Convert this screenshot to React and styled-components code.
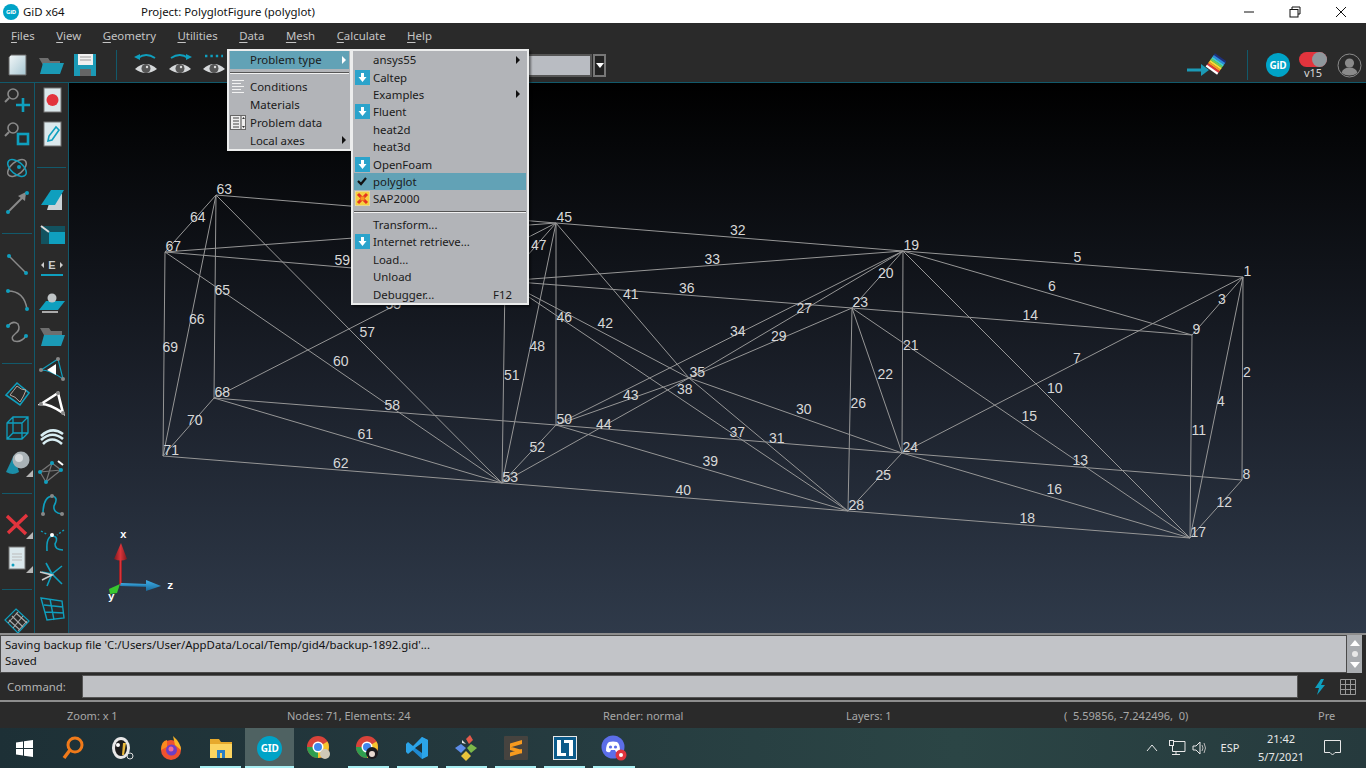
import React from 'react';
import styled, { createGlobalStyle } from 'styled-components';

const uiFont = '"Noto Sans", "Open Sans", sans-serif';

const GlobalStyle = createGlobalStyle`
  html, body {
    margin: 0;
    padding: 0;
    background: #2a2a2a;
  }
  * {
    box-sizing: border-box;
  }
`;

const Screen = styled.div`
  position: relative;
  width: 1366px;
  height: 768px;
  overflow: hidden;
  display: flex;
  flex-direction: column;
  font-family: ${uiFont};
  font-size: 11.4px;
  background: #2a2a2a;
`;

/* title bar */
const TitleBar = styled.div`
  height: 23px;
  background: #fff;
  display: flex;
  align-items: center;
  padding-left: 3px;
  color: #111;
  flex: none;
`;
const LogoDot = styled.span`
  width: ${p => p.$size}px;
  height: ${p => p.$size}px;
  border-radius: 50%;
  background: #00a3c7;
  color: #fff;
  font-weight: 700;
  font-size: ${p => p.$font}px;
  display: flex;
  align-items: center;
  justify-content: center;
  flex: none;
  letter-spacing: -0.2px;
`;
const AppName = styled.span`
  margin-left: 4px;
  width: 118px;
`;
const WindowButtons = styled.div`
  margin-left: auto;
  display: flex;
  padding-right: 2px;
`;
const WindowButton = styled.div`
  width: 46px;
  height: 23px;
  display: flex;
  align-items: center;
  justify-content: center;
`;

/* menu bar */
const MenuBar = styled.div`
  height: 25px;
  display: flex;
  align-items: center;
  gap: 21.5px;
  padding-left: 11px;
  color: #c4c4c4;
  flex: none;
`;
const Underlined = styled.span`
  text-decoration: underline;
  text-underline-offset: 2px;
  text-decoration-thickness: 1px;
`;

/* top toolbar */
const ToolBar = styled.div`
  height: 35px;
  display: flex;
  align-items: center;
  border-bottom: 1px solid #12596b;
  flex: none;
`;
const TopTool = styled.div`
  width: ${p => p.$w || 34}px;
  height: 34px;
  display: flex;
  align-items: center;
  justify-content: center;
  flex: none;
`;
const ToolSep = styled.div`
  width: 1px;
  height: 30px;
  background: #12596b;
  margin: 0 ${p => p.$right}px 0 ${p => p.$left}px;
  flex: none;
`;
const Combo = styled.div`
  width: 352px;
  height: 23px;
  margin-left: 9px;
  background: #b9bcc2;
  border: 2px solid #555;
  flex: none;
`;
const ComboArrow = styled.div`
  width: 13px;
  height: 23px;
  margin-left: 1px;
  border: 2px solid #777;
  background: #222;
  display: flex;
  align-items: center;
  justify-content: center;
  flex: none;
  &::after {
    content: '';
    border-left: 4px solid transparent;
    border-right: 4px solid transparent;
    border-top: 5px solid #fff;
  }
`;
const ToolRight = styled.div`
  margin-left: auto;
  display: flex;
  align-items: center;
`;
const VersionBox = styled.div`
  width: 32px;
  display: flex;
  flex-direction: column;
  align-items: center;
  color: #d8d8d8;
  font-size: 11px;
  line-height: 11px;
  margin: 0 7px;
`;
const Toggle = styled.div`
  position: relative;
  width: 28px;
  height: 15px;
  border-radius: 8px;
  background: #e2343d;
  &::after {
    content: '';
    position: absolute;
    right: 0;
    top: 0;
    width: 15px;
    height: 15px;
    border-radius: 50%;
    background: #8f979c;
  }
`;

/* middle: side tools + canvas */
const Middle = styled.div`
  height: 552px;
  display: flex;
  flex: none;
  border-bottom: 2px solid #8d8d8d;
`;
const SideColumn = styled.div`
  width: ${p => p.$w}px;
  flex: none;
  border-right: 1px solid #12596b;
  overflow: hidden;
`;
const SideTool = styled.div`
  position: relative;
  height: 34px;
  display: flex;
  align-items: center;
  justify-content: center;
  &::after {
    content: ${p => (p.$corner ? "''" : 'none')};
    position: absolute;
    right: 1px;
    bottom: 2px;
    border-left: 7px solid transparent;
    border-bottom: 7px solid #b5b5b5;
  }
`;
const SideSep = styled.div`
  height: ${p => p.$h || 28}px;
  display: flex;
  align-items: center;
  padding: 0 2px;
  &::after {
    content: '';
    flex: 1;
    height: 1px;
    background: #12596b;
  }
`;
const Canvas = styled.div`
  flex: 1;
  background: linear-gradient(180deg, #000 0%, #1b202a 55%, #2f3a4a 100%);
`;
const MeshSvg = styled.svg`
  display: block;
  width: 100%;
  height: 100%;
`;
const MeshLabel = styled.text`
  font-family: "Liberation Sans", sans-serif;
  font-size: 14px;
  fill: #d8d8d8;
`;
const AxisLabel = styled.text`
  font-family: "Liberation Mono", monospace;
  font-size: 11px;
  font-weight: 700;
  fill: #fff;
`;

/* messages, command, status */
const MessageRow = styled.div`
  height: 38px;
  display: flex;
  flex: none;
  padding-right: 4px;
`;
const MessageBox = styled.div`
  flex: 1;
  background: #c2c4c8;
  border: 1px solid #4a4a4a;
  padding: 1px 4px;
  color: #111;
  line-height: 16px;
  white-space: pre;
`;
const ScrollBar = styled.div`
  width: 15px;
  background: #a9acb0;
  display: flex;
  flex-direction: column;
  align-items: center;
  justify-content: space-between;
  padding: 5px 0;
`;
const ScrollUp = styled.div`
  border-left: 5px solid transparent;
  border-right: 5px solid transparent;
  border-bottom: 6px solid #fff;
`;
const ScrollDown = styled.div`
  border-left: 5px solid transparent;
  border-right: 5px solid transparent;
  border-top: 6px solid #fff;
`;
const ScrollDot = styled.div`
  width: 6px;
  height: 6px;
  border-radius: 50%;
  background: #e8e8e8;
`;
const CommandRow = styled.div`
  height: 29px;
  display: flex;
  align-items: center;
  flex: none;
  border-bottom: 2px solid #8d8d8d;
  padding-left: 7px;
  color: #b5b5b5;
`;
const CommandLabel = styled.span`
  width: 75px;
  flex: none;
`;
const CommandInput = styled.div`
  width: 1216px;
  height: 23px;
  background: #bfc1c5;
  border: 1px solid #555;
  flex: none;
`;
const CommandTools = styled.div`
  display: flex;
  align-items: center;
  gap: 14px;
  margin-left: 16px;
`;
const StatusBar = styled.div`
  height: 26px;
  display: flex;
  align-items: center;
  flex: none;
  padding-left: 67px;
  color: #a8a8a8;
  font-size: 11px;
  white-space: pre;
`;
const StatusCell = styled.span`
  width: ${p => p.$w}px;
  flex: none;
`;

/* taskbar */
const TaskBar = styled.div`
  height: 40px;
  display: flex;
  align-items: stretch;
  flex: none;
  background: linear-gradient(90deg, #1d3036 0%, #24393e 35%, #2b4545 70%, #263a3d 100%);
`;
const TaskItem = styled.div`
  position: relative;
  width: ${p => p.$w || 49.2}px;
  flex: none;
  display: flex;
  align-items: center;
  justify-content: center;
  background: ${p => (p.$active ? '#4f6262' : 'transparent')};
  &::after {
    content: ${p => (p.$running ? "''" : 'none')};
    position: absolute;
    bottom: 0;
    left: ${p => (p.$active ? 0 : 4)}px;
    right: ${p => (p.$active ? 0 : 4)}px;
    height: 2px;
    background: #a8eef2;
  }
`;
const Tray = styled.div`
  margin-left: auto;
  display: flex;
  align-items: center;
  color: #e8e8e8;
`;
const TrayIcon = styled.div`
  width: ${p => p.$w}px;
  display: flex;
  justify-content: center;
  flex: none;
`;
const TrayText = styled.span`
  width: ${p => p.$w}px;
  text-align: center;
  flex: none;
  font-size: 11px;
  line-height: 18px;
`;

/* dropdown menus */
const Menu = styled.div`
  position: absolute;
  left: ${p => p.$left}px;
  top: 49px;
  width: ${p => p.$w}px;
  background: #b2b4b8;
  border: 2px solid #eceded;
  padding: 0 1px;
  color: #1a1a1a;
  box-shadow: 2px 2px 2px rgba(0, 0, 0, 0.45);
`;
const MenuRow = styled.div`
  position: relative;
  height: ${p => p.$h}px;
  display: flex;
  align-items: center;
  padding-left: ${p => p.$pad}px;
  padding-bottom: ${p => (p.$lift ? 2 : 0)}px;
  background: ${p => (p.$on ? '#62a2b6' : 'transparent')};
  white-space: pre;
`;
const RowIcon = styled.span`
  position: absolute;
  left: 0;
  top: 0;
  bottom: 0;
  width: 16px;
  display: flex;
  align-items: center;
  justify-content: center;
`;
const SubArrow = styled.span`
  position: absolute;
  right: ${p => p.$right}px;
  top: 50%;
  margin-top: -4px;
  border-top: 4px solid transparent;
  border-bottom: 4px solid transparent;
  border-left: 4px solid ${p => p.$color || '#111'};
`;
const Shortcut = styled.span`
  position: absolute;
  right: 14px;
`;
const MenuSep = styled.div`
  height: ${p => p.$h}px;
  display: flex;
  flex-direction: column;
  justify-content: center;
  &::before {
    content: '';
    height: 1px;
    background: #555;
  }
  &::after {
    content: '';
    height: 1px;
    background: #f2f2f2;
  }
`;

/* mesh data, in page coordinates */
const nodes = {
  1: [1243, 277], 8: [1242, 480], 9: [1192, 335], 17: [1190, 538],
  19: [903, 251], 23: [852, 308], 24: [902, 453], 28: [848, 511],
  35: [689, 378], 45: [556, 223], 49: [505, 281], 50: [556, 425],
  53: [502, 483], 63: [216, 195], 67: [165, 252], 68: [214, 398], 71: [163, 456],
};
const edges = [
  [2, 1, 8], [3, 1, 9], [4, 1, 17], [5, 1, 19], [6, 9, 19], [7, 1, 24],
  [10, 19, 17], [11, 9, 17], [12, 8, 17], [13, 24, 8], [14, 9, 23], [15, 23, 17],
  [16, 24, 17], [18, 28, 17], [20, 19, 23], [21, 19, 24], [22, 23, 24], [25, 24, 28],
  [26, 23, 28], [27, 19, 35], [29, 23, 35], [30, 24, 35], [31, 28, 35], [32, 19, 45],
  [33, 19, 49], [34, 19, 50], [36, 23, 49], [37, 50, 24], [38, 49, 28], [39, 50, 28],
  [40, 53, 28], [41, 45, 35], [42, 49, 35], [43, 50, 35], [44, 53, 35], [46, 45, 50],
  [47, 45, 49], [48, 45, 53], [51, 49, 53], [52, 50, 53], [54, 63, 45], [56, 67, 45],
  [55, 68, 45], [57, 63, 53], [58, 68, 50], [59, 67, 49], [60, 67, 53], [61, 68, 53],
  [62, 71, 53], [64, 63, 67], [65, 63, 68], [66, 63, 71], [69, 67, 71], [70, 68, 71],
];
// the labels of the far left block sit a little further left of their edge
const labelShift = { 58: -1, 59: -1, 60: -1, 61: -1, 64: -1, 65: -1, 66: -1, 69: -2, 70: -2 };

const Mesh = () => (
  <MeshSvg viewBox="69 83 1297 550">
    <defs>
      <linearGradient id="red" x1="0" x2="1" y1="0" y2="0">
        <stop offset="0" stopColor="#7d1a1e" />
        <stop offset="0.5" stopColor="#d8343a" />
        <stop offset="1" stopColor="#7d1a1e" />
      </linearGradient>
      <linearGradient id="blue" x1="0" x2="0" y1="0" y2="1">
        <stop offset="0" stopColor="#3fb0ea" />
        <stop offset="1" stopColor="#1a6b9c" />
      </linearGradient>
    </defs>
    {edges.map(([n, a, b]) => (
      <line
        key={n}
        x1={nodes[a][0]}
        y1={nodes[a][1]}
        x2={nodes[b][0]}
        y2={nodes[b][1]}
        stroke="#969696"
        strokeWidth="1"
      />
    ))}
    {edges.map(([n, a, b]) => (
      <MeshLabel
        key={n}
        x={(nodes[a][0] + nodes[b][0]) / 2 + 0.5 + (labelShift[n] || 0)}
        y={(nodes[a][1] + nodes[b][1]) / 2 - 2}
      >
        {n}
      </MeshLabel>
    ))}
    {Object.keys(nodes).map(id => (
      <MeshLabel key={id} x={nodes[id][0] + 0.5} y={nodes[id][1] - 1.5}>
        {id}
      </MeshLabel>
    ))}
    <rect x="119" y="558" width="3" height="27" fill="url(#red)" />
    <path d="M121 543 L114 559 Q121 562 127 559 Z" fill="url(#red)" />
    <path d="M121 583 L147 584 L147 587 L120 586 Z" fill="url(#blue)" />
    <path d="M146 580 L161 586 L146 591 Z" fill="url(#blue)" />
    <path d="M120 584 L117 593 L110 594 L109 589 Z" fill="#38c72e" />
    <AxisLabel x="120" y="538">x</AxisLabel>
    <AxisLabel x="167" y="589">z</AxisLabel>
    <AxisLabel x="108" y="600">y</AxisLabel>
  </MeshSvg>
);

/* tool icons */
const Ico = ({ size = 28, children }) => (
  <svg width={size} height={size} viewBox="0 0 28 28" fill="none">
    {children}
  </svg>
);
const T = '#0f9fbe';
const G = '#8a8a8a';
const Dot = ({ x, y, c = T }) => <circle cx={x} cy={y} r="2" fill={c} />;
const Page = ({ x = 7, y = 3, w = 15, h = 21 }) => (
  <rect x={x} y={y} width={w} height={h} fill="#dbe8ec" stroke="#777" strokeWidth="1" />
);
const Lens = () => (
  <>
    <circle cx="10" cy="8" r="5" stroke={G} strokeWidth="1.6" />
    <path d="M6 12 L2 16" stroke={G} strokeWidth="2" />
  </>
);
const Eye = ({ top }) => (
  <Ico>
    {top}
    <path d="M3 18 Q14 8 25 18 Q14 26 3 18 Z" fill="#d5d8da" />
    <circle cx="14" cy="17.5" r="4.5" fill="#555" />
    <circle cx="15" cy="16" r="1.2" fill="#ddd" />
  </Ico>
);

const leftTools = [
  [<Ico key="a"><Lens /><path d="M20 12V26M13 19H27" stroke={T} strokeWidth="2.6" /></Ico>],
  [<Ico key="b"><Lens /><rect x="15" y="14" width="10" height="10" stroke={T} strokeWidth="2.6" /></Ico>],
  [<Ico key="c"><ellipse cx="14" cy="14" rx="6" ry="11" stroke={G} strokeWidth="1.5" transform="rotate(50 14 14)" /><ellipse cx="14" cy="14" rx="6" ry="11" stroke={T} strokeWidth="1.5" transform="rotate(-50 14 14)" /><circle cx="16" cy="13" r="2" fill={T} /></Ico>],
  [<Ico key="d"><path d="M6 23 L22 7" stroke={G} strokeWidth="2" /><path d="M23 4 L22 13 L15 8 Z" fill={G} /><Dot x={5} y={24} /><Dot x={24} y={5} /></Ico>],
  'sep',
  [<Ico key="e"><path d="M6 6 L23 23" stroke={G} strokeWidth="1.5" /><Dot x={6} y={6} /><Dot x={23} y={23} /></Ico>],
  [<Ico key="f"><path d="M5 7 Q21 7 24 25" stroke={G} strokeWidth="1.5" /><Dot x={5} y={7} /><Dot x={24} y={25} /></Ico>],
  [<Ico key="g"><path d="M5 8 Q10 2 15 6 Q18 12 12 16 Q7 20 11 23 Q18 25 23 18" stroke={G} strokeWidth="1.5" /><Dot x={5} y={8} /><Dot x={23} y={18} /></Ico>],
  'sep',
  [<Ico key="h"><path d="M14 3 L26 13 L17 25 L3 15 Z" stroke={T} strokeWidth="1.6" /><path d="M14 6 Q18 10 23 10 Q21 16 17 22 Q12 16 7 15 Q11 10 14 6 Z" stroke="#b8a9a0" strokeWidth="1" /></Ico>],
  [<Ico key="i"><path d="M4 9 L10 3 H25 V19 L19 25 H4 Z M4 9 H19 V25 M19 9 L25 3 M4 25 L10 19 H25 M10 3 V19" stroke={T} strokeWidth="1.3" /></Ico>],
  [<Ico key="j"><path d="M11 7 L3 24 Q10 28 16 24 Z" fill="#1b8ea8" /><circle cx="18" cy="12" r="8.5" fill="#a9b2b6" /><circle cx="16" cy="10" r="4" fill="#d8dcde" /></Ico>, true],
  'sep',
  [<Ico key="k"><path d="M4 6 L23 24 M24 5 L5 23" stroke="#e2343d" strokeWidth="3.4" /></Ico>, true],
  [<Ico key="l"><Page x={6} y={3} w={16} h={22} /><path d="M9 10H19M9 13H19M9 16H19" stroke="#bbb" /><circle cx="10" cy="21" r="1.5" fill={T} /></Ico>, true],
  'sep',
  [<Ico key="m"><path d="M13 3 L26 15 L15 27 L2 14 Z" stroke={T} strokeWidth="1.2" /><path d="M9 10 L20 21 M13 7 L24 17 M6 14 L17 24 M20 10 L10 22 M24 15 L15 25 M15 6 L5 17" stroke="#aaa" strokeWidth="1.1" /></Ico>],
];

const rightTools = [
  [<Ico key="a"><Page x={6} y={2} w={17} h={24} /><circle cx="14.5" cy="14" r="6" fill="#e2343d" /></Ico>],
  [<Ico key="b"><Page x={6} y={2} w={17} h={24} /><path d="M10 21 L11 16 L18 7 L21 10 L14 20 Z" stroke={T} strokeWidth="1.6" /></Ico>],
  'sep',
  [<Ico key="c"><path d="M14 8 H24 V24 H9 Z" fill="#c9d2d6" /><path d="M13 4 H26 L17 19 H3 Z" fill="#0f9fbe" /></Ico>],
  [<Ico key="d"><path d="M3 6 H27 V24 H3 Z" fill="#12525f" /><path d="M11 12 H27 V24 H11 Z" fill="#0f9fbe" /><path d="M3 6 L11 12" stroke="#ddd" strokeWidth="2" /></Ico>],
  [<Ico key="e"><path d="M3 11 L6 8 V14 Z M25 11 L22 8 V14 Z" fill="#ccc" /><text x="14" y="15" textAnchor="middle" fontFamily="Liberation Sans" fontWeight="700" fontSize="11" fill="#ccc">E</text><path d="M3 21H25" stroke={T} strokeWidth="2" /></Ico>],
  [<Ico key="f"><path d="M8 13 H27 L20 22 H1 Z" fill="#0f9fbe" /><path d="M4 24 H20" stroke="#aaa" strokeWidth="2" /><circle cx="14" cy="10" r="4.5" fill="#bfc4c6" /></Ico>],
  [<Ico key="g"><path d="M2 6 H11 L13 9 H24 V13 H6 Z" fill="#6e6e6e" /><path d="M6 13 H27 L23 24 H3 Z" fill="#1b9ab6" /></Ico>],
  [<Ico key="h"><path d="M3 14 L20 3 L25 23 Q12 14 3 14 Z" stroke={T} strokeWidth="1.2" /><path d="M9 14 L18 8 L18 19 Z" fill="#fff" /><Dot x={3} y={14} c="#888" /><Dot x={20} y={3} c="#888" /><Dot x={25} y={23} c="#888" /></Ico>],
  [<Ico key="i"><path d="M3 14 L20 3 L25 23 Q12 14 3 14 Z" stroke="#fff" strokeWidth="2.6" /><Dot x={3} y={14} c="#888" /><Dot x={20} y={3} c="#888" /><Dot x={25} y={23} c="#888" /></Ico>],
  [<Ico key="j"><path d="M3 12 Q14 2 25 10 M3 16 Q14 6 25 15 M5 20 Q14 11 24 20" stroke="#d8eef3" strokeWidth="2.6" /></Ico>],
  [<Ico key="k"><path d="M2 14 L14 5 L23 12 L8 24 Z M14 5 L8 24 M2 14 L23 12" stroke="#777" strokeWidth="1.2" /><Dot x={2} y={14} /><Dot x={14} y={5} /><Dot x={23} y={12} /><Dot x={8} y={24} /><path d="M20 3 L25 7" stroke="#fff" strokeWidth="2" /></Ico>],
  [<Ico key="l"><path d="M5 22 Q5 5 14 4 Q21 5 16 14 Q15 21 24 22" stroke={T} strokeWidth="1.6" /><Dot x={5} y={22} c="#888" /><Dot x={14} y={4} c="#888" /><Dot x={24} y={22} c="#888" /></Ico>],
  [<Ico key="m"><path d="M9 25 Q8 10 15 10 Q21 11 17 18 Q17 24 25 24" stroke={T} strokeWidth="1.6" /><path d="M3 5 L10 9 M26 4 L19 9" stroke={T} strokeWidth="1.4" strokeDasharray="2 2" /><circle cx="14" cy="9" r="2" fill="#fff" /></Ico>],
  [<Ico key="n"><path d="M14 14 L8 3 M14 14 L24 6 M14 14 L4 12 M14 14 L9 26 M14 14 L24 24" stroke={T} strokeWidth="1.6" /><path d="M2 12 L14 15 L4 20" stroke="#ccc" strokeWidth="1.6" /></Ico>],
  [<Ico key="o"><path d="M3 4 L24 7 L26 24 L9 26 Z M6 11 L25 13 M7 18 L26 19 M12 5 L16 26" stroke={T} strokeWidth="1.4" /></Ico>],
];

const SideTools = ({ items, firstSep }) => {
  let sepIndex = 0;
  return items.map((item, i) => {
    if (item === 'sep') {
      sepIndex += 1;
      return <SideSep key={i} $h={sepIndex === 1 ? firstSep : 28} />;
    }
    return (
      <SideTool key={i} $corner={item[1]}>
        {item[0]}
      </SideTool>
    );
  });
};

const RowDownload = () => (
  <svg width="15" height="15" viewBox="0 0 15 15">
    <rect width="15" height="15" fill="#2ba3cb" />
    <path d="M6 3H9V7H11.5L7.5 12L3.5 7H6Z" fill="#fff" />
  </svg>
);
const RowCheck = () => (
  <svg width="12" height="12" viewBox="0 0 12 12">
    <path d="M2 6 L5 9 L10 3" stroke="#111" strokeWidth="2.2" fill="none" />
  </svg>
);
const RowSap = () => (
  <svg width="15" height="15" viewBox="0 0 15 15">
    <rect width="15" height="15" fill="#f6d040" stroke="#ddd" />
    <path d="M3 3 L12 12 M12 3 L3 12" stroke="#e53320" strokeWidth="3" />
    <rect x="5.5" y="5.5" width="4" height="4" fill="#f59a20" />
  </svg>
);
const RowLines = () => (
  <svg width="14" height="15" viewBox="0 0 14 15">
    <path d="M1 1.5H13M1 4.5H10M1 7.5H13M1 10.5H10M1 13.5H13" stroke="#f2f2f2" />
  </svg>
);
const RowTable = () => (
  <svg width="16" height="15" viewBox="0 0 16 15">
    <rect x="0.5" y="0.5" width="15" height="14" fill="#eee" stroke="#666" />
    <path d="M3 3H9M3 6H9M3 9H9M3 12H9M11 1V14" stroke="#444" />
    <path d="M12 4L13.5 2L15 4ZM12 11L13.5 13L15 11Z" fill="#333" />
  </svg>
);

const problemTypes = [
  ['ansys55', null, true],
  ['Caltep', <RowDownload key="i" />],
  ['Examples', null, true],
  ['Fluent', <RowDownload key="i" />],
  ['heat2d'],
  ['heat3d'],
  ['OpenFoam', <RowDownload key="i" />],
  ['polyglot', <RowCheck key="i" />, false, true],
  ['SAP2000', <RowSap key="i" />],
];
const problemTools = [
  ['Transform...'],
  ['Internet retrieve...', <RowDownload key="i" />],
  ['Load...'],
  ['Unload'],
  ['Debugger...', null, false, false, 'F12'],
];

const MenuItem = ({ item }) => {
  const [label, icon, sub, on, shortcut] = item;
  return (
    <MenuRow $h={17.4} $pad={19} $on={on}>
      {icon && <RowIcon>{icon}</RowIcon>}
      {label}
      {sub && <SubArrow $right={6} />}
      {shortcut && <Shortcut>{shortcut}</Shortcut>}
    </MenuRow>
  );
};

const taskIcons = [
  [
    <svg key="s" width="26" height="26" viewBox="0 0 26 26" fill="none">
      <circle cx="15" cy="10" r="7" stroke="#f07a1a" strokeWidth="3" />
      <path d="M10 15 L4 23" stroke="#f07a1a" strokeWidth="3.4" />
    </svg>,
  ],
  [
    <svg key="p" width="26" height="26" viewBox="0 0 26 26">
      <ellipse cx="12" cy="13" rx="9" ry="11" fill="#e8e8e8" />
      <ellipse cx="12" cy="13" rx="6" ry="8" fill="#1c1c1c" />
      <path d="M14 8 L17 8 L15 20 L13 20 Z" fill="#e8b83a" />
      <circle cx="9" cy="10" r="2" fill="#fff" />
      <circle cx="21" cy="21" r="3" fill="none" stroke="#ddd" />
    </svg>,
  ],
  [
    <svg key="f" width="26" height="26" viewBox="0 0 26 26">
      <circle cx="13" cy="15" r="10" fill="#f0522e" />
      <path d="M15 1 Q23 8 23 15 L17 10 Z" fill="#fbb526" />
      <path d="M3 15 Q3 6 9 5 L9 12 Z" fill="#f98a1e" />
      <circle cx="13.5" cy="15" r="5.5" fill="#6d3fc4" />
      <circle cx="13" cy="14" r="2.5" fill="#f06a9a" />
    </svg>,
  ],
  [
    <svg key="d" width="24" height="24" viewBox="0 0 24 24">
      <path d="M1 3H10L12 6H23V22H1Z" fill="#e6a92c" />
      <path d="M1 8H23V22H1Z" fill="#fbd460" />
      <path d="M8 22V14H16V22H13V17H11V22Z" fill="#2a7fc4" />
    </svg>,
    true,
  ],
  [<LogoDot key="g" $size={25} $font={10}>GID</LogoDot>, true, true],
  [
    <svg key="c" width="26" height="26" viewBox="0 0 26 26">
      <circle cx="12" cy="12" r="11" fill="#d8433a" />
      <path d="M12 12 L1 12 A11 11 0 0 0 12 23 Z" fill="#2f9e4f" />
      <path d="M12 12 L12 23 A11 11 0 0 0 21.5 6.5 Z" fill="#f5c52f" />
      <circle cx="12" cy="12" r="5.5" fill="#fff" />
      <circle cx="12" cy="12" r="4" fill="#4186ee" />
      <circle cx="19" cy="19" r="5" fill="#cfc8b8" />
    </svg>,
  ],
  [
    <svg key="c2" width="26" height="26" viewBox="0 0 26 26">
      <circle cx="12" cy="12" r="11" fill="#d8433a" />
      <path d="M12 12 L1 12 A11 11 0 0 0 12 23 Z" fill="#2f9e4f" />
      <path d="M12 12 L12 23 A11 11 0 0 0 21.5 6.5 Z" fill="#f5c52f" />
      <circle cx="12" cy="12" r="5.5" fill="#fff" />
      <circle cx="12" cy="12" r="4" fill="#4186ee" />
      <circle cx="17" cy="18" r="6" fill="#1c1a1e" />
      <circle cx="17" cy="19" r="3" fill="#e8d8d0" />
    </svg>,
    true,
  ],
  [
    <svg key="v" width="24" height="24" viewBox="0 0 24 24">
      <path d="M17 1 L23 4 V20 L17 23 L6 13 Z" fill="#1f8ad2" />
      <path d="M17 1 L23 4 V20 L17 23 V7 L8 14 L3 18 L1 16 V8 L3 6 L8 10 Z" fill="#2ba4e8" />
      <path d="M17 7 V17 L10 12 Z" fill="#1d3036" />
    </svg>,
    true,
  ],
  [
    <svg key="k" width="26" height="26" viewBox="0 0 26 26">
      <path d="M13 4 L17 0 L20 5 L16 9 Z" fill="#e35a4b" />
      <path d="M8 9 L13 13 L8 18 L2 13 Z" fill="#5d8de8" />
      <path d="M18 9 L24 13 L18 18 L14 13 Z" fill="#7cb84a" />
      <path d="M13 16 L18 21 L13 26 L8 21 Z" fill="#e8c23a" />
      <path d="M9 5 L13 9 L9 8 Z" fill="#e8e8e8" />
    </svg>,
    true,
  ],
  [
    <svg key="st" width="24" height="24" viewBox="0 0 24 24">
      <rect width="24" height="24" rx="1" fill="#46433f" />
      <path d="M6 7.5L18 4V8L6 11.5ZM6 10.5L18 14V17.5L6 14ZM6 16.5L18 13V17L6 20.5Z" fill="#f79a1f" />
    </svg>,
    true,
  ],
  [
    <svg key="l" width="24" height="24" viewBox="0 0 24 24">
      <rect x="0.5" y="0.5" width="23" height="23" fill="#0c5b8a" stroke="#e8e8e8" />
      <path d="M4 4H8V17H13V20H4Z" fill="#fff" />
      <path d="M11 4H20V20H16V7H11Z" fill="#fff" />
    </svg>,
    true,
  ],
  [
    <svg key="dc" width="26" height="26" viewBox="0 0 26 26">
      <circle cx="12" cy="12" r="11.5" fill="#5c6ee8" />
      <path d="M5 16 Q5 9 8 7 Q12 6 16 7 Q19 9 19 16 Q17 18 15 17 L14 15 H10 L9 17 Q7 18 5 16 Z" fill="#fff" />
      <circle cx="9.5" cy="12" r="1.6" fill="#5c6ee8" />
      <circle cx="14.5" cy="12" r="1.6" fill="#5c6ee8" />
      <circle cx="20" cy="20" r="5.5" fill="#e0353e" />
      <circle cx="20" cy="20" r="2" fill="#fff" />
    </svg>,
    true,
  ],
];

const App = () => (
  <Screen>
    <GlobalStyle />
    <TitleBar>
      <LogoDot $size={16} $font={6}>GiD</LogoDot>
      <AppName>GiD x64</AppName>
      <span>Project: PolyglotFigure (polyglot)</span>
      <WindowButtons>
        <WindowButton>
          <svg width="12" height="12" viewBox="0 0 12 12"><path d="M1 6H11" stroke="#111" /></svg>
        </WindowButton>
        <WindowButton>
          <svg width="12" height="12" viewBox="0 0 12 12" fill="none">
            <path d="M3 3V1H11V8H9" stroke="#111" />
            <rect x="1" y="3.5" width="8" height="7.5" stroke="#111" />
          </svg>
        </WindowButton>
        <WindowButton>
          <svg width="12" height="12" viewBox="0 0 12 12"><path d="M1 1L11 11M11 1L1 11" stroke="#111" /></svg>
        </WindowButton>
      </WindowButtons>
    </TitleBar>

    <MenuBar>
      {['Files', 'View', 'Geometry', 'Utilities', 'Data', 'Mesh', 'Calculate', 'Help'].map(m => (
        <span key={m}>
          <Underlined>{m[0]}</Underlined>
          {m.slice(1)}
        </span>
      ))}
    </MenuBar>

    <ToolBar>
      <TopTool>
        <svg width="24" height="26" viewBox="0 0 24 26">
          <defs>
            <linearGradient id="pg" x1="0" x2="1" y1="0" y2="1">
              <stop offset="0" stopColor="#f2f7f8" />
              <stop offset="1" stopColor="#a6c6d2" />
            </linearGradient>
          </defs>
          <path d="M6 3H21V23H4V5Z" fill="url(#pg)" stroke="#666" />
        </svg>
      </TopTool>
      <TopTool>
        <Ico>
          <path d="M2 7H11L13 10H23V14H6Z" fill="#6e6e6e" />
          <path d="M6 12H27L23 23H3Z" fill="#1b9ab6" />
        </Ico>
      </TopTool>
      <TopTool>
        <Ico>
          <rect x="3" y="3" width="22" height="22" fill="#1b9ab6" />
          <rect x="7" y="3" width="15" height="11" fill="#f0f0f0" />
          <path d="M9 6H20M9 9H20" stroke="#999" />
          <rect x="9" y="18" width="11" height="7" fill="#666" />
        </Ico>
      </TopTool>
      <ToolSep $left={14} $right={12} />
      <TopTool>
        <Eye top={<><path d="M6 7 Q14 1 23 7" stroke={T} strokeWidth="1.8" /><path d="M2 6 L8 3 L8 9 Z" fill={T} /></>} />
      </TopTool>
      <TopTool>
        <Eye top={<><path d="M5 7 Q14 1 22 7" stroke={T} strokeWidth="1.8" /><path d="M26 6 L20 3 L20 9 Z" fill={T} /></>} />
      </TopTool>
      <TopTool>
        <Eye top={<path d="M5 5H23" stroke={T} strokeWidth="2.4" strokeDasharray="2.4 3" />} />
      </TopTool>
      <Combo />
      <ComboArrow />
      <ToolRight>
        <TopTool $w={48}>
          <svg width="40" height="28" viewBox="0 0 40 28">
            <path d="M1 19H17" stroke="#1b9ab6" strokeWidth="3" />
            <path d="M15 13L23 19L15 25Z" fill="#1b9ab6" />
            <g transform="rotate(35 30 13)" strokeWidth="2.2">
              <path d="M23 6H37" stroke="#1f2f7a" />
              <path d="M23 8H37" stroke="#2a8ae0" />
              <path d="M23 10H37" stroke="#3fc9d8" />
              <path d="M23 12H37" stroke="#66d060" />
              <path d="M23 14H37" stroke="#f5e03a" />
              <path d="M23 16H37" stroke="#f59a20" />
              <path d="M23 18H37" stroke="#e2343d" />
              <path d="M23 20H37" stroke="#ffffff" />
            </g>
          </svg>
        </TopTool>
        <ToolSep $left={17} $right={18} />
        <LogoDot $size={24} $font={10}>GiD</LogoDot>
        <VersionBox>
          <Toggle />
          v15
        </VersionBox>
        <TopTool $w={26}>
          <svg width="25" height="25" viewBox="0 0 25 25">
            <circle cx="12.5" cy="12.5" r="11.5" fill="none" stroke="#8a8a8a" />
            <circle cx="12.5" cy="10" r="4.6" fill="#8a8a8a" />
            <path d="M4.5 20 Q6 14.5 12.5 14.5 Q19 14.5 20.5 20 Q12.5 25 4.5 20 Z" fill="#8a8a8a" />
          </svg>
        </TopTool>
        <TopTool $w={4} />
      </ToolRight>
    </ToolBar>

    <Middle>
      <SideColumn $w={35}>
        <SideTools items={leftTools} firstSep={28} />
      </SideColumn>
      <SideColumn $w={34}>
        <SideTools items={rightTools} firstSep={32} />
      </SideColumn>
      <Canvas>
        <Mesh />
      </Canvas>
    </Middle>

    <MessageRow>
      <MessageBox>
        Saving backup file 'C:/Users/User/AppData/Local/Temp/gid4/backup-1892.gid'...{'\n'}Saved
      </MessageBox>
      <ScrollBar>
        <ScrollUp />
        <ScrollDot />
        <ScrollDown />
      </ScrollBar>
    </MessageRow>

    <CommandRow>
      <CommandLabel>Command:</CommandLabel>
      <CommandInput />
      <CommandTools>
        <svg width="12" height="16" viewBox="0 0 12 16"><path d="M7 0 L1 9 H5 L3 16 L11 6 H7 L10 0Z" fill="#0f9fbe" /></svg>
        <svg width="16" height="16" viewBox="0 0 16 16" fill="none">
          <path d="M0.5 0.5H15.5V15.5H0.5ZM5.5 0.5V15.5M10.5 0.5V15.5M0.5 5.5H15.5M0.5 10.5H15.5" stroke="#999" />
        </svg>
      </CommandTools>
    </CommandRow>

    <StatusBar>
      <StatusCell $w={220}>Zoom: x 1</StatusCell>
      <StatusCell $w={316}>Nodes: 71, Elements: 24</StatusCell>
      <StatusCell $w={243}>Render: normal</StatusCell>
      <StatusCell $w={218}>Layers: 1</StatusCell>
      <StatusCell $w={254}>(  5.59856, -7.242496,  0)</StatusCell>
      <StatusCell $w={30}>Pre</StatusCell>
    </StatusBar>

    <TaskBar>
      <TaskItem $w={48.4}>
        <svg width="17" height="17" viewBox="0 0 17 17">
          <path d="M0 2.4L7 1.4V8H0ZM8 1.2L17 0V8H8ZM0 9H7V15.6L0 14.6ZM8 9H17V17L8 15.8Z" fill="#fff" />
        </svg>
      </TaskItem>
      {taskIcons.map(([icon, running, active], i) => (
        <TaskItem key={i} $running={running} $active={active}>
          {icon}
        </TaskItem>
      ))}
      <Tray>
        <TrayIcon $w={24}>
          <svg width="12" height="8" viewBox="0 0 12 8" fill="none"><path d="M1 7L6 1L11 7" stroke="#e8e8e8" /></svg>
        </TrayIcon>
        <TrayIcon $w={26}>
          <svg width="17" height="16" viewBox="0 0 17 16" fill="none">
            <path d="M3.5 1.5H16V11.5H3.5ZM3 14.5H11M7 11.5V14.5" stroke="#e8e8e8" />
            <rect x="0.5" y="0.5" width="4" height="5" fill="#24393e" stroke="#e8e8e8" />
          </svg>
        </TrayIcon>
        <TrayIcon $w={20}>
          <svg width="16" height="14" viewBox="0 0 16 14" fill="none">
            <path d="M1 5H4L8 1V13L4 9H1Z" stroke="#e8e8e8" />
            <path d="M10 4Q12 7 10 10M12 2Q15 7 12 12" stroke="#b8b8b8" />
          </svg>
        </TrayIcon>
        <TrayText $w={40}>ESP</TrayText>
        <TrayText $w={62}>21:42<br />5/7/2021</TrayText>
        <TrayIcon $w={40}>
          <svg width="17" height="16" viewBox="0 0 17 16" fill="none">
            <path d="M0.5 0.5H16.5V12.5H11L8.5 15L6 12.5H0.5Z" stroke="#e8e8e8" />
          </svg>
        </TrayIcon>
        <TrayIcon $w={14} />
      </Tray>
    </TaskBar>

    <Menu $left={227} $w={125}>
      <MenuRow $h={18} $pad={20} $on $lift>
        Problem type
        <SubArrow $right={3} $color="#fff" />
      </MenuRow>
      <MenuSep $h={8} />
      <MenuRow $h={18} $pad={20}><RowIcon><RowLines /></RowIcon>Conditions</MenuRow>
      <MenuRow $h={18} $pad={20}>Materials</MenuRow>
      <MenuRow $h={18} $pad={20}><RowIcon><RowTable /></RowIcon>Problem data</MenuRow>
      <MenuRow $h={18} $pad={20}>
        Local axes
        <SubArrow $right={3} />
      </MenuRow>
    </Menu>
    <Menu $left={351} $w={178}>
      {problemTypes.map(item => <MenuItem key={item[0]} item={item} />)}
      <MenuSep $h={8.4} />
      {problemTools.map(item => <MenuItem key={item[0]} item={item} />)}
    </Menu>
  </Screen>
);

export default App;
